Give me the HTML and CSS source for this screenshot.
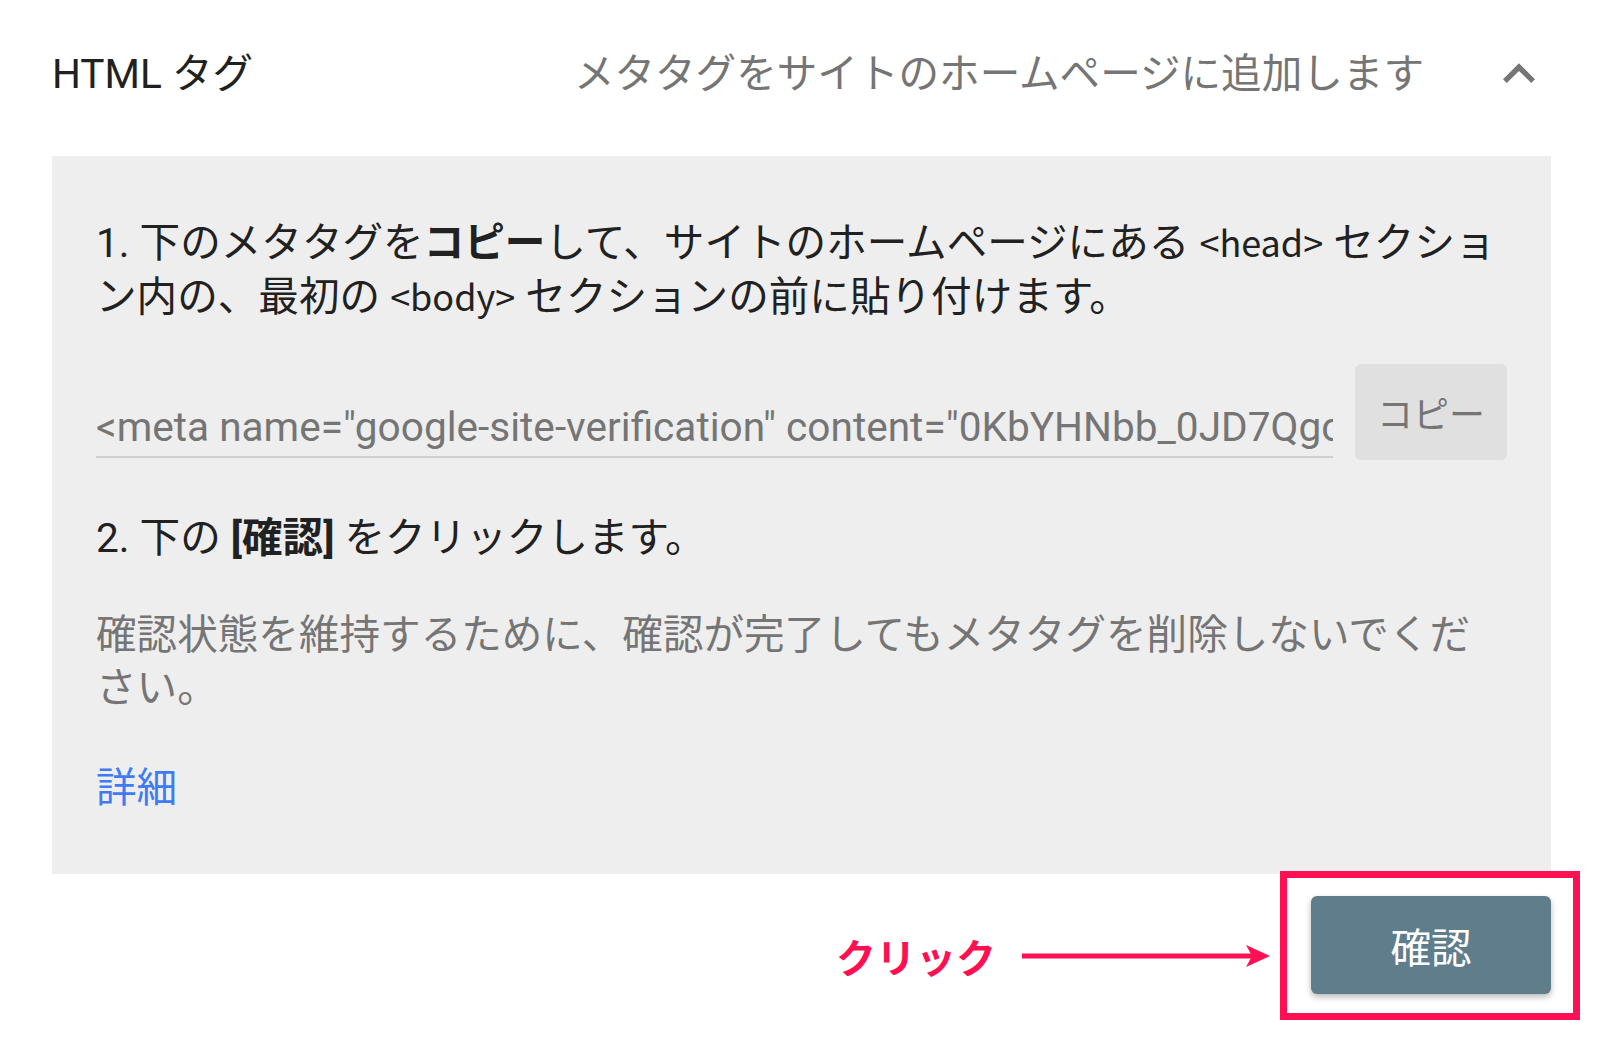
FILE: index.html
```html
<!DOCTYPE html>
<html lang="ja">
<head>
<meta charset="utf-8">
<title>HTML タグ</title>
<link rel="stylesheet" href="styles.css">
</head>
<body>
<div class="page">
  <div class="header">
    <div class="title">HTML タグ</div>
    <div class="subtitle">メタタグをサイトのホームページに追加します</div>
    <svg class="chevron" viewBox="0 0 24 24" width="64" height="64" aria-hidden="true">
      <path d="M12 8l-6 6 1.41 1.41L12 10.83l4.59 4.58L18 14z" fill="#757575"/>
    </svg>
  </div>
  <div class="panel">
    <p class="step">1. 下のメタタグを<b>コピー</b>して、サイトのホームページにある <span class="code">&lt;head&gt;</span> セクション内の、最初の <span class="code">&lt;body&gt;</span> セクションの前に貼り付けます。</p>
    <div class="field-row">
      <div class="field"><span class="field-text">&lt;meta name="google-site-verification" content="0KbYHNbb_0JD7QgcXr4mT2vL9aPqW" /&gt;</span></div>
      <div class="copy-btn">コピー</div>
    </div>
    <p class="step step2">2. 下の <b>[確認]</b> をクリックします。</p>
    <p class="note">確認状態を維持するために、確認が完了してもメタタグを削除しないでください。</p>
    <a class="more" href="#">詳細</a>
  </div>
  <div class="actions">
    <div class="callout">
      <span class="callout-label">クリック</span>
      <svg class="arrow" viewBox="0 0 248 24" width="248" height="24" aria-hidden="true">
        <line x1="0" y1="12" x2="234" y2="12" stroke="#ff1053" stroke-width="5"/>
        <path d="M248 12 L224 1 L230 12 L224 23 Z" fill="#ff1053"/>
      </svg>
    </div>
    <div class="confirm-wrap">
      <div class="confirm-btn">確認</div>
      <div class="highlight"></div>
    </div>
  </div>
</div>
</body>
</html>
```

FILE: styles.css
```css
html, body {
  margin: 0;
  padding: 0;
  background: #ffffff;
}
body {
  font-family: Roboto, "Noto Sans CJK JP", sans-serif;
  font-size: 40.6px;
  color: #212121;
}
.page {
  padding: 0 49px 48px 52px;
  min-height: 1043px;
  box-sizing: border-box;
}
.header {
  display: flex;
  align-items: center;
  padding: 42px 0 50px;
  line-height: 48px;
}
.title {
  color: #212121;
}
.subtitle {
  margin-left: auto;
  color: #757575;
}
.chevron {
  display: block;
  margin-left: 63px;
  flex: none;
}
.panel {
  background: #eeeeee;
  padding: 60px 44px 59px;
}
.step {
  margin: 0;
  line-height: 54px;
  color: #212121;
}
.step b {
  font-weight: 700;
}
.code {
  font-family: "Noto Sans CJK JP", sans-serif;
  font-size: 36px;
  line-height: 0;
}
.field-row {
  display: flex;
  align-items: flex-start;
  margin-top: 40px;
}
.field {
  flex: 1;
  min-width: 0;
  height: 94px;
  box-sizing: border-box;
  border-bottom: 2px solid #cfcfcf;
  padding-bottom: 5px;
  display: flex;
  align-items: flex-end;
  overflow: hidden;
  margin-right: 22px;
}
.field-text {
  white-space: nowrap;
  line-height: 48px;
  color: #757575;
}
.copy-btn {
  flex: none;
  width: 152px;
  height: 96px;
  background: #e0e0e0;
  border-radius: 6px;
  color: #757575;
  font-size: 36px;
  display: flex;
  align-items: center;
  justify-content: center;
}
.step2 {
  margin-top: 51px;
}
.note {
  margin: 44px 0 0;
  line-height: 53px;
  color: #757575;
}
.more {
  display: block;
  margin-top: 47px;
  line-height: 53px;
  color: #3f7bf6;
  text-decoration: none;
}
.actions {
  display: flex;
  justify-content: flex-end;
  align-items: flex-start;
  margin-top: 22px;
}
.callout {
  display: flex;
  align-items: center;
  margin-top: 36px;
  margin-right: 41px;
}
.callout-label {
  font-family: "Noto Sans CJK JP", sans-serif;
  font-size: 40px;
  font-weight: 700;
  color: #ff1053;
  line-height: 48px;
}
.arrow {
  display: block;
  margin-left: 26px;
}
.confirm-wrap {
  position: relative;
}
.confirm-btn {
  width: 240px;
  height: 98px;
  background: #607d8b;
  border-radius: 6px;
  color: #ffffff;
  display: flex;
  align-items: center;
  justify-content: center;
  box-shadow: 0 3px 6px rgba(0, 0, 0, 0.28);
}
.highlight {
  position: absolute;
  left: -31px;
  top: -25px;
  width: 300px;
  height: 149px;
  box-sizing: border-box;
  border: 7px solid #ff1053;
}
```
